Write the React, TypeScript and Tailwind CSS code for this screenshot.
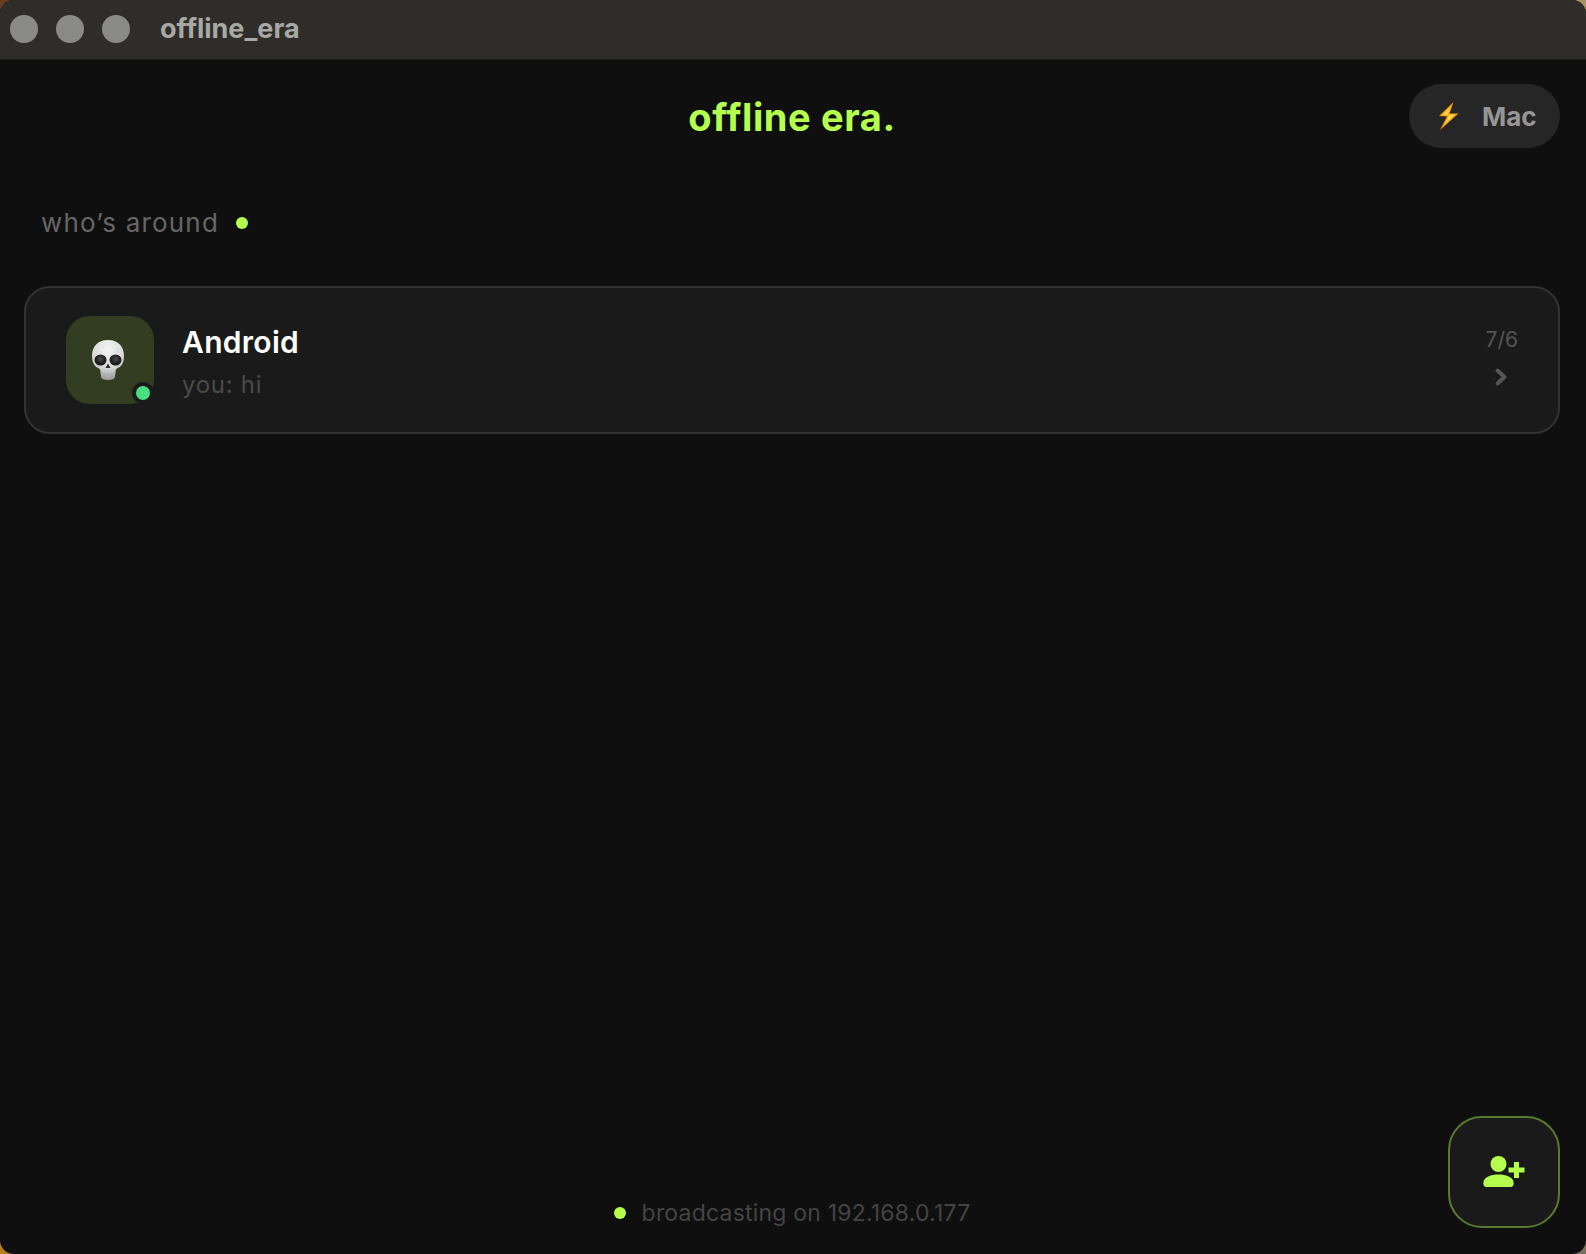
const uiFont = "font-['Inter','Liberation_Sans',sans-serif]";
const bodyFont = "font-['Inter','Noto_Sans',sans-serif]";

function Bolt() {
  return (
    <svg width="22" height="30" viewBox="0 0 22 30">
      <path d="M15.500 1 L1 15 L9 15.500 L2 29 L20.500 12.500 L11.500 12.500 Z" fill="#f59e0b" />
      <path d="M13 6 L4 14 L11 14.300 L6 24 L17.500 13.500 L9.500 13.500 Z" fill="#ffd54a" />
    </svg>
  );
}

function Skull() {
  return (
    <svg width="34" height="42" viewBox="0 0 34 42">
      <defs>
        <radialGradient id="bone" cx="50%" cy="22%" r="75%">
          <stop offset="0%" stopColor="#f4f4f4" />
          <stop offset="65%" stopColor="#d8d8d8" />
          <stop offset="100%" stopColor="#a0a0a0" />
        </radialGradient>
        <radialGradient id="socket" cx="50%" cy="40%" r="60%">
          <stop offset="0%" stopColor="#4a4a4a" />
          <stop offset="60%" stopColor="#222" />
          <stop offset="100%" stopColor="#141414" />
        </radialGradient>
      </defs>
      <path
        d="M17 1 C6 1 1 8 1 17 C1 23 3 27 7 29 C9 30 9.500 31 9.500 33 L10 38 C10.500 40 13 41 17 41 C21 41 23.500 40 24 38 L24.500 33 C24.500 31 25 30 27 29 C31 27 33 23 33 17 C33 8 28 1 17 1 Z"
        fill="url(#bone)"
      />
      <ellipse cx="9.500" cy="21" rx="6" ry="5.500" fill="url(#socket)" />
      <ellipse cx="24.500" cy="21" rx="6" ry="5.500" fill="url(#socket)" />
      <path d="M17 24.500 L14.500 29 L19.500 29 Z" fill="#2a2a2a" />
      <path d="M13 34 V40 M17 34 V41 M21 34 V40" stroke="#a8a8a8" strokeWidth="1" />
    </svg>
  );
}

function PersonPlus() {
  return (
    <svg width="44" height="32" viewBox="0 0 44 32" fill="#b5ff4d">
      <circle cx="15.500" cy="8" r="8" />
      <path d="M0.500 26 C1 21 8 18.500 15.500 18.500 C23 18.500 30 21 30.500 26 C31 29 30 31 27 31 H4 C1 31 0 29 0.500 26 Z" />
      <path d="M33.500 6 V22 M25.500 14 H41.500" stroke="#b5ff4d" strokeWidth="5" fill="none" />
    </svg>
  );
}

export default function App() {
  return (
    <div className="w-full h-[1254px] overflow-hidden bg-[conic-gradient(#a89468_0_25%,#7a7060_25%_50%,#b8801f_50%_75%,#6b3a22_75%_100%)]">
      <div className="relative flex flex-col h-full rounded-[14px] overflow-hidden bg-[#0f0f0f]">
        <div className={`flex items-center h-[60px] shrink-0 bg-[#2e2d29] border-b border-[#1f1f1c] pl-2.5 ${uiFont}`}>
          <div className="flex gap-[18px] -mt-0.5">
            <span className="w-7 h-7 rounded-full bg-[#8a8a88]" />
            <span className="w-7 h-7 rounded-full bg-[#8a8a88]" />
            <span className="w-7 h-7 rounded-full bg-[#8a8a88]" />
          </div>
          <span className="ml-[30px] text-[27px] font-bold text-[#a8a8a4]">offline_era</span>
        </div>

        <div className="grid grid-cols-[1fr_auto_1fr] items-center pt-6 pl-6 pr-[26px]">
          <div />
          <h1 className={`mt-0.5 text-[38px] tracking-[0.6px] font-bold text-[#b5ff4d] ${bodyFont}`}>offline era.</h1>
          <div className="justify-self-end flex items-center gap-[22px] h-16 w-[151px] pl-[29px] rounded-full bg-[#262626]">
            <Bolt />
            <span className={`text-[26px] font-bold text-[#969696] ${uiFont}`}>Mac</span>
          </div>
        </div>

        <div className="flex items-center gap-[17px] mt-[58px] pl-[41px]">
          <span className={`text-[26px] tracking-[1.2px] leading-[34px] text-[#666] ${bodyFont}`}>who’s around</span>
          <span className="w-3 h-3 rounded-full bg-[#b5ff4d]" />
        </div>

        <div className="flex items-center mt-[46px] ml-6 mr-[26px] h-[148px] pl-[40px] pr-[40px] rounded-[26px] border-2 border-[#333] bg-[#1a1a1a]">
          <div className="relative flex items-center justify-center w-[88px] h-[88px] rounded-[24px] bg-[#333d22]">
            <span className="-ml-1"><Skull /></span>
            <span className="absolute right-0 bottom-0 w-[22px] h-[22px] rounded-full border-4 border-[#1a1a1a] bg-[#4ade80]" />
          </div>
          <div className={`flex flex-col gap-[8px] ml-[28px] mt-1 ${bodyFont}`}>
            <span className="text-[30px] leading-[38px] tracking-[0.3px] font-semibold text-white">Android</span>
            <span className="text-[24px] leading-[32px] tracking-[0.7px] text-[#4a4a4a]">you: hi</span>
          </div>
          <div className="flex flex-col items-end gap-[13px] mb-2 ml-auto">
            <span className={`text-[21px] leading-[28px] text-[#555] ${bodyFont}`}>7/6</span>
            <svg className="mr-[10px]" width="14" height="20" viewBox="0 0 14 20" fill="none">
              <path d="M3.500 3.500 L10.500 10 L3.500 16.500" stroke="#555" strokeWidth="4" strokeLinecap="round" strokeLinejoin="round" />
            </svg>
          </div>
        </div>

        <div className={`flex items-center justify-center gap-[16px] mt-auto mb-[25px] pr-0.5 ${bodyFont}`}>
          <span className="w-3 h-3 rounded-full bg-[#b5ff4d]" />
          <span className="text-[23px] leading-[32px] tracking-[0.2px] text-[#444]">broadcasting on 192.168.0.177</span>
        </div>

        <button className="absolute right-[26px] bottom-[26px] flex items-center justify-center w-[112px] h-[112px] rounded-[34px] border-2 border-[#5a7a2f] bg-[#1a1a1a]">
          <span className="ml-0.5"><PersonPlus /></span>
        </button>
      </div>
    </div>
  );
}
